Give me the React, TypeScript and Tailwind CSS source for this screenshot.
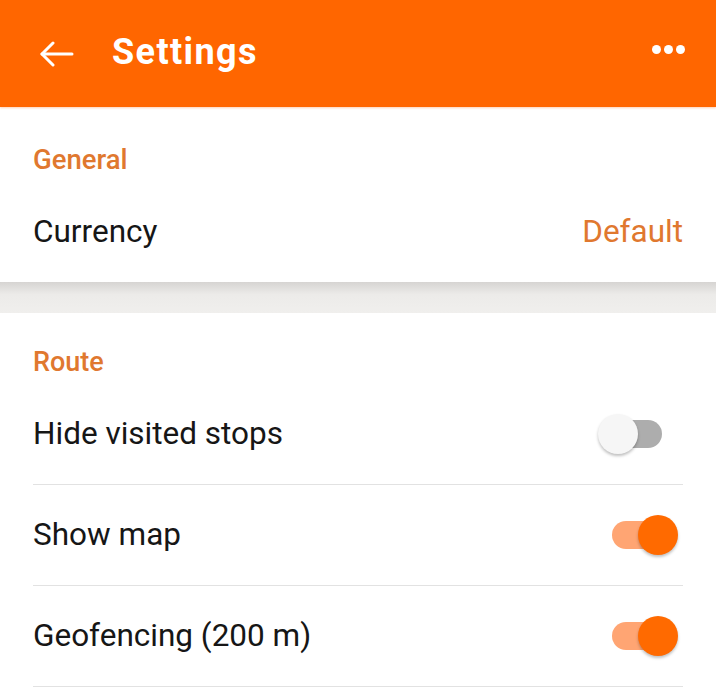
import { useState } from 'react'

type Row = { id: string; label: string; on: boolean }

const initialRoute: Row[] = [
  { id: 'hide', label: 'Hide visited stops', on: false },
  { id: 'map', label: 'Show map', on: true },
  { id: 'geo', label: 'Geofencing (200 m)', on: true },
]

export default function App() {
  const [rows, setRows] = useState(initialRoute)

  const toggle = (id: string) => {
    setRows(rows.map(r => (r.id === id ? { ...r, on: !r.on } : r)))
  }

  return (
    <div className="min-h-[687px] bg-white font-['Roboto',sans-serif] text-[#161616]">
      {/* App bar */}
      <header className="relative z-10 flex h-[107px] items-center bg-[#ff6600] text-white shadow-[0_1px_2px_rgba(255,120,40,0.35)]">
        <button className="ml-[39px] flex h-[26px] w-[35px] items-center">
          <svg width="35" height="26" viewBox="0 0 35 26" fill="none" stroke="white" strokeWidth="3" strokeLinecap="round" strokeLinejoin="round">
            <path d="M3 13h30" />
            <path d="M14 2 3 13l11 11" />
          </svg>
        </button>
        <h1 className="ml-[38px] mt-[-4px] text-[36px] font-bold tracking-[1.4px]">Settings</h1>
        <div className="ml-auto mr-[31px] mt-[-8px] flex gap-[3px]">
          <span className="size-[9px] rounded-full bg-white" />
          <span className="size-[9px] rounded-full bg-white" />
          <span className="size-[9px] rounded-full bg-white" />
        </div>
      </header>

      {/* General */}
      <section className="px-[33px]">
        <div className="h-[74px] pt-[38px]">
          <h2 className="text-[27.5px] font-medium leading-[30px] text-[#e0782f]">General</h2>
        </div>
        <div className="flex h-[101px] items-center justify-between text-[31.5px]">
          <span>Currency</span>
          <span className="text-[#e0782f]">Default</span>
        </div>
      </section>

      <div className="h-[31px] bg-gradient-to-b from-[#d6d4d2] via-[#ecebe9] via-40% to-[#f0efed]" />

      {/* Route */}
      <section className="px-[33px]">
        <div className="h-[71px] pt-[34px]">
          <h2 className="text-[27px] font-medium leading-[30px] text-[#e0782f]">Route</h2>
        </div>
        {rows.map(row => (
          <div
            key={row.id}
            className="flex h-[101px] items-center justify-between border-b border-[#e2e2e2] text-[31.5px]"
          >
            <span>{row.label}</span>
            <Switch on={row.on} onClick={() => toggle(row.id)} />
          </div>
        ))}
      </section>
    </div>
  )
}

function Switch({ on, onClick }: { on: boolean; onClick: () => void }) {
  return (
    <button onClick={onClick} className="relative mr-[5px] h-[40px] w-[80px]">
      <span
        className={`absolute left-[14px] top-[6px] h-[28px] w-[50px] rounded-full ${on ? 'bg-[#ffa573]' : 'bg-[#adadad]'}`}
      />
      <span
        className={`absolute top-0 size-[40px] rounded-full shadow-[0_2px_3px_rgba(0,0,0,0.25)] ${on ? 'left-[40px] bg-[#ff6a00]' : 'left-0 bg-[#f6f6f6]'}`}
      />
    </button>
  )
}
